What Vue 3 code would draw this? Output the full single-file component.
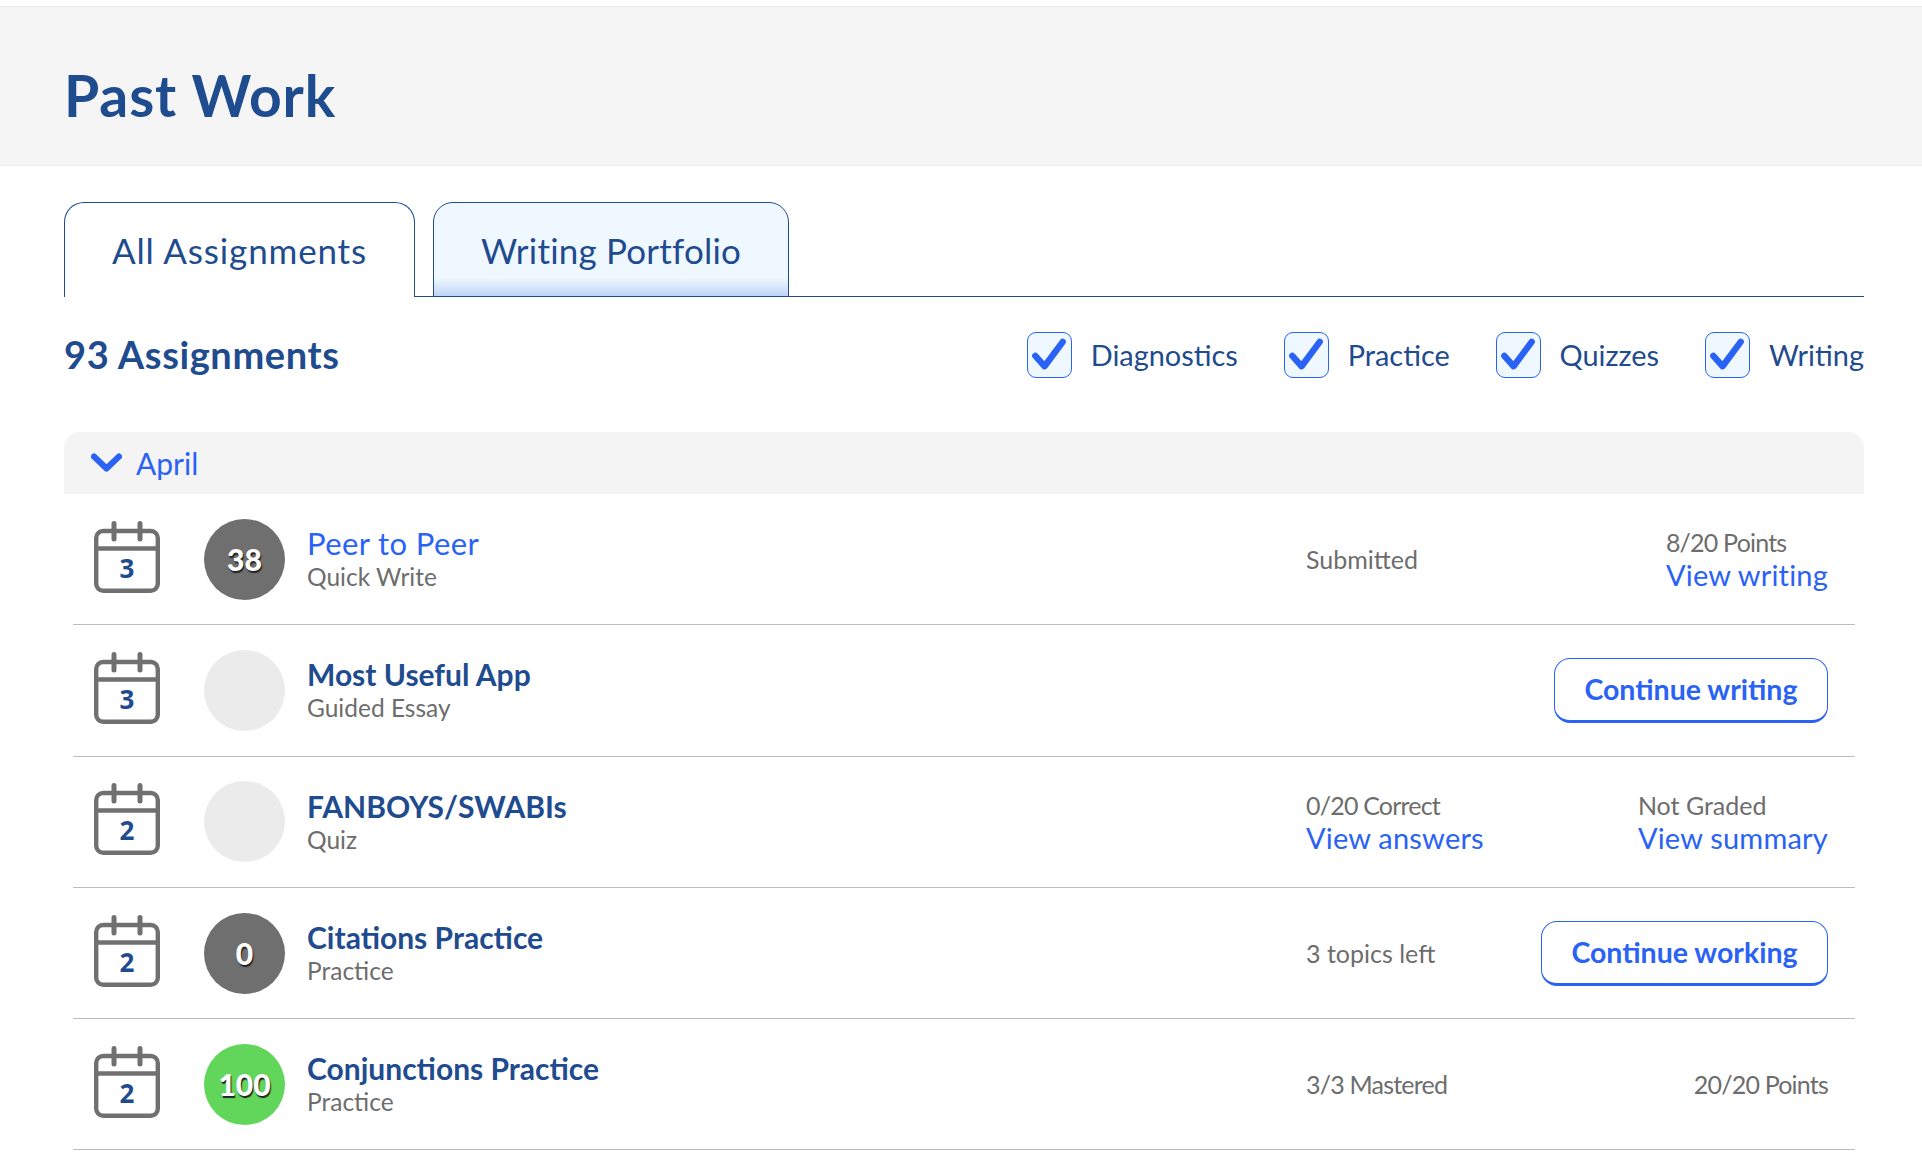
<script setup>
const filters = ['Diagnostics', 'Practice', 'Quizzes', 'Writing']
const rows = [
  { day: 3, score: '38', tone: 'grey', title: 'Peer to Peer', link: true, sub: 'Quick Write', status: 'Submitted', points: '8/20 Points', action: 'View writing' },
  { day: 3, score: '', tone: 'empty', title: 'Most Useful App', sub: 'Guided Essay', button: 'Continue writing' },
  { day: 2, score: '', tone: 'empty', title: 'FANBOYS/SWABIs', sub: 'Quiz', status: '0/20 Correct', statusAction: 'View answers', points: 'Not Graded', action: 'View summary' },
  { day: 2, score: '0', tone: 'grey', title: 'Citations Practice', sub: 'Practice', status: '3 topics left', button: 'Continue working' },
  { day: 2, score: '100', tone: 'green', title: 'Conjunctions Practice', sub: 'Practice', status: '3/3 Mastered', points: '20/20 Points' }
]
const hasFraction = (text) => /\d\/\d/.test(text)
</script>

<template>
  <div class="page">
    <header class="hero"><h1>Past Work</h1></header>
    <main class="content">
      <div class="tabs">
        <div class="tab active">All Assignments</div>
        <div class="tab">Writing Portfolio</div>
      </div>
      <div class="toolbar">
        <h2>93 Assignments</h2>
        <div class="filters">
          <label v-for="f in filters" :key="f" class="filter">
            <span class="box">
              <svg viewBox="0 0 46 46" width="45" height="46"><path d="M8.5 24 L18 34.5 L36.5 9.5" fill="none" stroke="#2962f5" stroke-width="6.5" stroke-linecap="round" stroke-linejoin="round"/></svg>
            </span>
            <span class="filter-label">{{ f }}</span>
          </label>
        </div>
      </div>
      <div class="month">
        <svg viewBox="0 0 31 20" width="31" height="20"><path d="M3 3.5 L15.5 15.5 L28 3.5" fill="none" stroke="#2962f5" stroke-width="6" stroke-linecap="round" stroke-linejoin="round"/></svg>
        <span>April</span>
      </div>
      <div v-for="r in rows" :key="r.title" class="row">
        <svg class="cal" viewBox="0 0 66 72" width="66" height="72">
          <rect x="2.2" y="10" width="61.6" height="59.8" rx="7" fill="none" stroke="#707070" stroke-width="4.4"/>
          <path d="M2 27.5 H64" stroke="#707070" stroke-width="4.4"/>
          <path d="M20 2.5 V18 M46 2.5 V18" stroke="#707070" stroke-width="5" stroke-linecap="round"/>
          <text x="33" y="57" text-anchor="middle" class="day">{{ r.day }}</text>
        </svg>
        <div class="score" :class="r.tone">{{ r.score }}</div>
        <div class="name">
          <div class="title" :class="{ link: r.link }">{{ r.title }}</div>
          <div class="sub">{{ r.sub }}</div>
        </div>
        <div class="col1">
          <div v-if="r.status" class="muted" :class="{ tight: hasFraction(r.status) }">{{ r.status }}</div>
          <div v-if="r.statusAction" class="action">{{ r.statusAction }}</div>
        </div>
        <div class="col2">
          <button v-if="r.button" class="btn">{{ r.button }}</button>
          <div v-else-if="r.points">
            <div class="muted" :class="{ tight: hasFraction(r.points) }">{{ r.points }}</div>
            <div v-if="r.action" class="action">{{ r.action }}</div>
          </div>
        </div>
      </div>
    </main>
  </div>
</template>

<style>
html, body { background: #fff; }
</style>

<style scoped>
.page { height: 1154px; overflow: hidden; font-family: "Lato", "Noto Sans", sans-serif; color: #1f4b8f; padding-top: 6px; box-sizing: border-box; }
.hero { height: 160px; box-sizing: border-box; background: #f5f5f5; border-top: 1px solid #e8e8e8; border-bottom: 1px solid #e8e8e8; padding: 17px 64px 0; display: flex; align-items: center; }
h1 { margin: 0; font-size: 57px; font-weight: 700; letter-spacing: 0.9px; }
.content { padding: 36px 58px 0 64px; }
.tabs { display: flex; gap: 18px; border-bottom: 1px solid #1f4b8f; height: 95px; box-sizing: border-box; }
.tab { height: 95px; box-sizing: border-box; width: 356px; border: 1px solid #1f4b8f; border-radius: 20px 20px 0 0; font-size: 35px; letter-spacing: 0.2px; line-height: 94px; text-align: center; background: linear-gradient(#f0f8ff, #f0f8ff 75px, #c0d4f8 93px); }
.tab.active { width: 351px; background: #fff; border-bottom: 0; letter-spacing: 0.85px; }
.toolbar { display: flex; justify-content: space-between; align-items: center; padding: 35px 0 54px; }
h2 { margin: 0; font-size: 38px; font-weight: 700; letter-spacing: 0.6px; position: relative; top: -1px; }
.filters { display: flex; gap: 45.8px; }
.filter { display: flex; align-items: center; gap: 19px; font-size: 28.9px; }
.filter-label { position: relative; top: -1px; }
.box { width: 45px; height: 46px; box-sizing: border-box; border: 1.5px solid #2962f5; border-radius: 9px; background: #f0f8ff; display: flex; align-items: center; justify-content: center; overflow: hidden; }
.box svg { flex: none; }
.month { height: 62px; box-sizing: border-box; background: #f4f4f4; border-radius: 16px 16px 0 0; display: flex; align-items: center; gap: 14px; padding-left: 27px; font-size: 30px; color: #2962f5; }
.row { height: 131.3px; box-sizing: border-box; margin: 0 9px; padding: 0 27px 0 21px; border-bottom: 1.3px solid #bdbdbd; display: flex; align-items: center; }
.cal { flex: none; margin-top: -5px; }
.day { font-family: "Open Sans", sans-serif; font-size: 26px; font-weight: 700; fill: #1f4b8f; }
.score { width: 81px; height: 81px; flex: none; margin: 0 22px 0 44px; border-radius: 50%; display: flex; align-items: center; justify-content: center; color: #fff; font-size: 30px; font-weight: 900; text-shadow: 1px 2px 1px #222; }
.score.grey { background: #6f6f6f; }
.score.green { background: #62d65a; }
.score.empty { background: #ebebeb; }
.name { flex: 1; }
.title { font-size: 30px; font-weight: 700; line-height: 36px; }
.title.link { font-size: 31px; letter-spacing: 0.4px; color: #2962f5; font-weight: 400; }
.sub { font-size: 24.5px; color: #6d6d6d; line-height: 32px; }
.col1 { width: 235px; flex: none; }
.col2 { width: 287px; flex: none; display: flex; justify-content: flex-end; }
.muted { font-size: 25px; color: #6d6d6d; line-height: 32px; }
.muted.tight { letter-spacing: -0.8px; }
.action { font-size: 29px; letter-spacing: 0.2px; color: #2962f5; line-height: 34px; }
.btn { height: 65px; box-sizing: border-box; padding: 0 29.5px; background: #fff; border: 1.5px solid #2962f5; border-bottom-width: 3.5px; border-radius: 16px; color: #2962f5; font: 700 28.5px "Lato", sans-serif; white-space: nowrap; }
</style>
